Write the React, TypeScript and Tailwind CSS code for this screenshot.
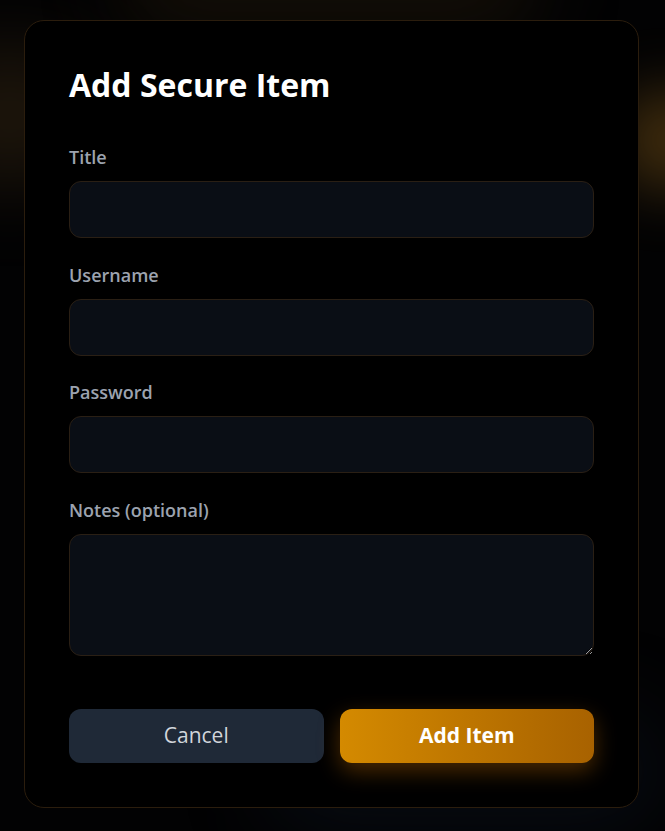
import React from "react";

export default function App() {
  return (
    <div
      className="relative min-h-[831px] w-full overflow-hidden bg-[#020203]"
      style={{ fontFamily: '"Open Sans", "Noto Sans", sans-serif' }}
    >
      <div className="pointer-events-none absolute -left-[80px] top-[50px] h-[130px] w-[180px] rounded-full bg-[#3a2a14] opacity-50 blur-[40px]" />
      <div className="pointer-events-none absolute -right-[60px] top-[90px] h-[100px] w-[110px] rounded-full bg-[#6b4a16] opacity-60 blur-[30px]" />
      <div className="pointer-events-none absolute left-[120px] -top-[60px] h-[90px] w-[420px] rounded-full bg-[#1e160a] opacity-70 blur-[40px]" />
      <div className="pointer-events-none absolute right-[0px] bottom-[0px] h-[120px] w-[400px] rounded-full bg-[#0a0f18] opacity-70 blur-[40px]" />

      <div className="relative ml-[24px] mt-[20px] w-[615px] rounded-[20px] border border-[#2b1d0d] bg-black p-11">
        <h1 className="mb-10 text-[32px] font-bold leading-[40px] text-white">Add Secure Item</h1>

        <div className="flex flex-col gap-[24.5px]">
          <div className="flex flex-col">
            <label className="mb-3 text-[18px] font-semibold leading-6 text-[#9ca3af]">Title</label>
            <input className="h-[57px] w-full rounded-xl border border-[#2a1f14] bg-[#0a0e15] px-4 text-white outline-none" />
          </div>
          <div className="flex flex-col">
            <label className="mb-3 text-[18px] font-semibold leading-6 text-[#9ca3af]">Username</label>
            <input className="h-[57px] w-full rounded-xl border border-[#2a1f14] bg-[#0a0e15] px-4 text-white outline-none" />
          </div>
          <div className="flex flex-col">
            <label className="mb-3 text-[18px] font-semibold leading-6 text-[#9ca3af]">Password</label>
            <input type="password" className="h-[57px] w-full rounded-xl border border-[#2a1f14] bg-[#0a0e15] px-4 text-white outline-none" />
          </div>
          <div className="flex flex-col">
            <label className="mb-3 text-[18px] font-semibold leading-6 text-[#9ca3af]">Notes (optional)</label>
            <textarea className="block h-[122px] w-full rounded-xl border border-[#2a1f14] bg-[#0a0e15] px-4 py-3 text-white outline-none" />
          </div>
        </div>

        <div className="mt-[53px] flex gap-4">
          <button className="h-[54px] flex-1 rounded-xl bg-[#1f2937] text-[21px] text-[#d1d5db]">Cancel</button>
          <button className="h-[54px] flex-1 rounded-xl bg-gradient-to-r from-[#d48a00] to-[#a86200] text-[21px] font-bold text-white shadow-[0_8px_22px_rgba(217,119,6,0.35)]">
            Add Item
          </button>
        </div>
      </div>
    </div>
  );
}
